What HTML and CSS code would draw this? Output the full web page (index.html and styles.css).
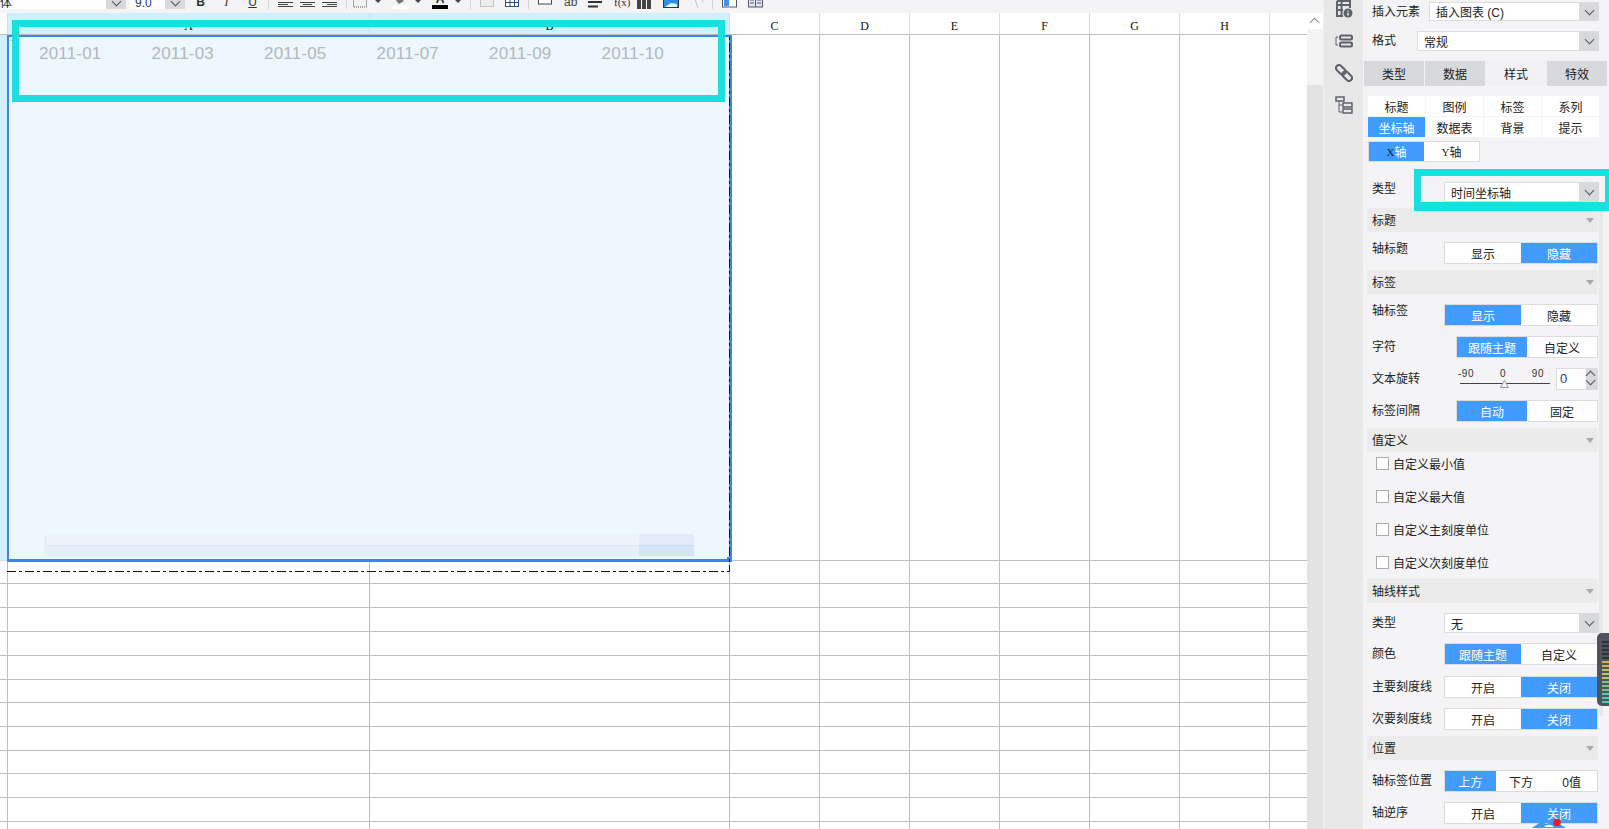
FILE: index.html
```html
<!DOCTYPE html>
<html lang="zh">
<head>
  <meta charset="UTF-8">
  <title>图表样式</title>
  <link rel="stylesheet" href="styles.css">
</head>
<body>
<div class="app">
  <div class="workspace">
    <div class="toolbar">
      <div class="combo font-combo"><span class="combo-text">宋体</span><span class="combo-arrow"></span></div>
      <div class="combo size-combo"><span class="combo-text">9.0</span><span class="combo-arrow"></span></div>
      <div class="tb-group biu">
        <span class="tb-char bold">B</span><span class="tb-char italic">I</span><span class="tb-char under">U</span>
      </div>
      <i class="tb-sep"></i>
      <div class="tb-group aligns">
        <svg width="15" height="16"><path d="M0 9.500h15M0 11.500h10M0 13.500h15" stroke="#444"/></svg>
        <svg width="15" height="16"><path d="M0 9.500h15M3 11.500h9M0 13.500h15" stroke="#444"/></svg>
        <svg width="15" height="16"><path d="M0 9.500h15M5 11.500h10M0 13.500h15" stroke="#444"/></svg>
      </div>
      <i class="tb-sep"></i>
      <svg class="ml6" width="14" height="16"><rect x=".5" y="2.500" width="13" height="11.500" fill="none" stroke="#555" stroke-dasharray="1 1"/></svg>
      <i class="tb-caret ml8"></i>
      <svg class="ml12" width="15" height="16"><path d="M4 2l7 6-5 3-4-5z" fill="#777"/><rect y="12" width="15" height="4" fill="#fff"/></svg>
      <i class="tb-caret ml7"></i>
      <div class="font-color ml11"><span>A</span><i></i></div>
      <i class="tb-caret ml7"></i>
      <i class="tb-sep"></i>
      <div class="tb-group pair">
        <svg width="14" height="16"><rect x=".5" y="1.500" width="13" height="12" fill="#eee" stroke="#c4c4c4"/></svg>
        <svg width="14" height="16"><rect x=".5" y="1.500" width="13" height="12" fill="#fff" stroke="#2e4f7c"/><path d="M0 5h14M0 9.500h14M5 1v12M9.500 1v12" stroke="#2e4f7c"/></svg>
      </div>
      <i class="tb-sep"></i>
      <div class="tb-group insert">
        <svg width="14" height="16"><rect x=".5" y="-4" width="13" height="15" fill="#fff" stroke="#444"/></svg>
        <span class="tb-char ab">ab</span>
        <svg width="14" height="16"><path d="M0 9h14M0 13.500h10" stroke="#333" stroke-width="2"/></svg>
        <span class="tb-char fx">f(x)</span>
      </div>
      <div class="tb-group media">
        <svg width="14" height="16"><path d="M0 7h4v9H0zM5 7h4v9H5zM10 7h4v9h-4z" fill="#444"/></svg>
        <svg width="16" height="16"><rect x=".5" y="2.500" width="15" height="12" fill="#2f8fe8" stroke="#334"/><path d="M2 14l6-4 6 1v3z" fill="#dff"/></svg>
        <svg width="16" height="16"><path d="M3 4l4 11M7 4l6 5" stroke="#c4c4c4" fill="none"/></svg>
      </div>
      <i class="tb-sep ml5"></i>
      <div class="tb-group pair">
        <svg width="15" height="16"><rect x=".5" y="1.500" width="14" height="12.500" fill="#fff" stroke="#556"/><rect x="2" y="3" width="5" height="10" fill="#3f93e6"/></svg>
        <svg width="15" height="16"><rect x=".5" y="1.500" width="14" height="12.500" fill="#dfe7f2" stroke="#556"/><path d="M7.500 2v12M2 7h4M9 7h4M2 10h4M9 10h4" stroke="#556"/></svg>
      </div>
    </div>

    <div class="sheet">
      <div class="row head">
        <i class="cell corner"></i><span class="cell col-a on">A</span><span class="cell col-b on">B</span><span class="cell col">C</span><span class="cell col">D</span><span class="cell col">E</span><span class="cell col">F</span><span class="cell col">G</span><span class="cell col">H</span><i class="cell col-last"></i>
      </div>
      <div class="row tall"><i class="cell corner on"></i><i class="cell col-a"></i><i class="cell col-b"></i><i class="cell col"></i><i class="cell col"></i><i class="cell col"></i><i class="cell col"></i><i class="cell col"></i><i class="cell col"></i><i class="cell col-last"></i></div>
      <div class="row h23"><i class="cell corner"></i><i class="cell col-a"></i><i class="cell col-b"></i><i class="cell col"></i><i class="cell col"></i><i class="cell col"></i><i class="cell col"></i><i class="cell col"></i><i class="cell col"></i><i class="cell col-last"></i></div>
      <div class="row"><i class="cell corner"></i><i class="cell col-a"></i><i class="cell col-b"></i><i class="cell col"></i><i class="cell col"></i><i class="cell col"></i><i class="cell col"></i><i class="cell col"></i><i class="cell col"></i><i class="cell col-last"></i></div>
      <div class="row"><i class="cell corner"></i><i class="cell col-a"></i><i class="cell col-b"></i><i class="cell col"></i><i class="cell col"></i><i class="cell col"></i><i class="cell col"></i><i class="cell col"></i><i class="cell col"></i><i class="cell col-last"></i></div>
      <div class="row"><i class="cell corner"></i><i class="cell col-a"></i><i class="cell col-b"></i><i class="cell col"></i><i class="cell col"></i><i class="cell col"></i><i class="cell col"></i><i class="cell col"></i><i class="cell col"></i><i class="cell col-last"></i></div>
      <div class="row"><i class="cell corner"></i><i class="cell col-a"></i><i class="cell col-b"></i><i class="cell col"></i><i class="cell col"></i><i class="cell col"></i><i class="cell col"></i><i class="cell col"></i><i class="cell col"></i><i class="cell col-last"></i></div>
      <div class="row h23"><i class="cell corner"></i><i class="cell col-a"></i><i class="cell col-b"></i><i class="cell col"></i><i class="cell col"></i><i class="cell col"></i><i class="cell col"></i><i class="cell col"></i><i class="cell col"></i><i class="cell col-last"></i></div>
      <div class="row"><i class="cell corner"></i><i class="cell col-a"></i><i class="cell col-b"></i><i class="cell col"></i><i class="cell col"></i><i class="cell col"></i><i class="cell col"></i><i class="cell col"></i><i class="cell col"></i><i class="cell col-last"></i></div>
      <div class="row"><i class="cell corner"></i><i class="cell col-a"></i><i class="cell col-b"></i><i class="cell col"></i><i class="cell col"></i><i class="cell col"></i><i class="cell col"></i><i class="cell col"></i><i class="cell col"></i><i class="cell col-last"></i></div>
      <div class="row h23"><i class="cell corner"></i><i class="cell col-a"></i><i class="cell col-b"></i><i class="cell col"></i><i class="cell col"></i><i class="cell col"></i><i class="cell col"></i><i class="cell col"></i><i class="cell col"></i><i class="cell col-last"></i></div>
      <div class="row"><i class="cell corner"></i><i class="cell col-a"></i><i class="cell col-b"></i><i class="cell col"></i><i class="cell col"></i><i class="cell col"></i><i class="cell col"></i><i class="cell col"></i><i class="cell col"></i><i class="cell col-last"></i></div>
      <div class="row"><i class="cell corner"></i><i class="cell col-a"></i><i class="cell col-b"></i><i class="cell col"></i><i class="cell col"></i><i class="cell col"></i><i class="cell col"></i><i class="cell col"></i><i class="cell col"></i><i class="cell col-last"></i></div>
      <div class="row"><i class="cell corner"></i><i class="cell col-a"></i><i class="cell col-b"></i><i class="cell col"></i><i class="cell col"></i><i class="cell col"></i><i class="cell col"></i><i class="cell col"></i><i class="cell col"></i><i class="cell col-last"></i></div>
    </div>
  </div>

  <div class="vscroll">
    <div class="vscroll-btn"><i></i></div>
    <div class="vscroll-track"></div>
    <div class="vscroll-thumb"></div>
  </div>

  <div class="rail">
    <svg width="18" height="18" viewBox="0 0 18 18"><path d="M2 1h13v7M2 1v15h6M2 5h13M6.500 1v15M2 10h6" fill="none" stroke="#5c616c" stroke-width="2"/><circle cx="13" cy="13" r="4.500" fill="#5c616c"/><path d="M13 10.500v1M13 12.500v3" stroke="#e8e8e8" stroke-width="1.500"/></svg>
    <svg width="18" height="18" viewBox="0 0 18 18"><path d="M3 5H1v8h2" fill="none" stroke="#5c616c"/><rect x="5" y="3.500" width="12" height="4" rx="1.500" fill="none" stroke="#5c616c" stroke-width="2"/><rect x="5" y="10.500" width="12" height="4" rx="1.500" fill="none" stroke="#5c616c" stroke-width="2"/></svg>
    <svg width="18" height="18" viewBox="0 0 18 18"><g fill="none" stroke="#5c616c" stroke-width="2" transform="rotate(45 9 9)"><rect x="-1" y="6" width="11" height="6" rx="3"/><rect x="8" y="6" width="11" height="6" rx="3"/></g></svg>
    <svg width="18" height="18" viewBox="0 0 18 18"><rect x="1" y="1" width="8" height="4" fill="none" stroke="#5c616c" stroke-width="1.500"/><path d="M4 5v11h3M4 9h3" fill="none" stroke="#5c616c"/><rect x="8" y="7" width="9" height="4" fill="none" stroke="#5c616c" stroke-width="1.500"/><rect x="8" y="13" width="9" height="4" fill="none" stroke="#5c616c" stroke-width="1.500"/></svg>
  </div>

  <div class="panel">
    <div class="p-row h19">
      <span class="p-label">插入元素</span>
      <div class="select w170"><span>插入图表 (C)</span><i class="select-arrow"></i></div>
    </div>
    <div class="p-row h20">
      <span class="p-label">格式</span>
      <div class="select w182"><span>常规</span><i class="select-arrow"></i></div>
    </div>
    <div class="tabs">
      <span>类型</span><span>数据</span><span class="on">样式</span><span>特效</span>
    </div>
    <div class="subtabs">
      <span>标题</span><span>图例</span><span>标签</span><span>系列</span>
      <span class="on">坐标轴</span><span>数据表</span><span>背景</span><span>提示</span>
    </div>
    <div class="toggle axis-toggle"><span class="on"><b>X</b>轴</span><span><b>Y</b>轴</span></div>
    <div class="p-row type-row">
      <span class="p-label up">类型</span>
      <div class="select w155"><span>时间坐标轴</span><i class="select-arrow"></i></div>
    </div>

    <div class="section">标题<i></i></div>
    <div class="p-row">
      <span class="p-label up">轴标题</span>
      <div class="toggle w154"><span>显示</span><span class="on">隐藏</span></div>
    </div>

    <div class="section">标签<i></i></div>
    <div class="p-row">
      <span class="p-label up">轴标签</span>
      <div class="toggle w154"><span class="on">显示</span><span>隐藏</span></div>
    </div>
    <div class="p-row">
      <span class="p-label">字符</span>
      <div class="toggle w142"><span class="on">跟随主题</span><span>自定义</span></div>
    </div>
    <div class="p-row">
      <span class="p-label">文本旋转</span>
      <div class="rotate">
        <div class="slider">
          <div class="ticks"><span>-90</span><span>0</span><span>90</span></div>
          <svg class="thumb" width="9" height="8"><path d="M4.500 .5L8.500 7.500H.5z" fill="#f4f4f6" stroke="#999"/></svg>
        </div>
        <div class="spin"><span>0</span><div class="spin-btns"><i class="up-ch"></i><i class="down-ch"></i></div></div>
      </div>
    </div>
    <div class="p-row">
      <span class="p-label">标签间隔</span>
      <div class="toggle w142"><span class="on">自动</span><span>固定</span></div>
    </div>

    <div class="section">值定义<i></i></div>
    <div class="checks">
      <label><i></i>自定义最小值</label>
      <label><i></i>自定义最大值</label>
      <label><i></i>自定义主刻度单位</label>
      <label><i></i>自定义次刻度单位</label>
    </div>

    <div class="section">轴线样式<i></i></div>
    <div class="p-row h20">
      <span class="p-label">类型</span>
      <div class="select w155"><span>无</span><i class="select-arrow"></i></div>
    </div>
    <div class="p-row">
      <span class="p-label">颜色</span>
      <div class="toggle w154"><span class="on">跟随主题</span><span>自定义</span></div>
    </div>
    <div class="p-row mt11">
      <span class="p-label">主要刻度线</span>
      <div class="toggle w154"><span>开启</span><span class="on">关闭</span></div>
    </div>
    <div class="p-row">
      <span class="p-label">次要刻度线</span>
      <div class="toggle w154"><span>开启</span><span class="on">关闭</span></div>
    </div>

    <div class="section">位置<i></i></div>
    <div class="p-row">
      <span class="p-label">轴标签位置</span>
      <div class="toggle w154"><span class="on">上方</span><span>下方</span><span>0值</span></div>
    </div>
    <div class="p-row">
      <span class="p-label">轴逆序</span>
      <div class="toggle w154"><span>开启</span><span class="on">关闭</span></div>
    </div>
    <i class="panel-scroll"></i>
  </div>

  <!-- things lying over the sheet and the panel -->
  <div class="chart">
    <div class="axis-labels">
      <span>2011-01</span><span>2011-03</span><span>2011-05</span><span>2011-07</span><span>2011-09</span><span>2011-10</span>
    </div>
    <div class="range"><i class="range-mark"></i><i class="range-handle"></i></div>
    <i class="chart-plus"></i>
    <i class="chart-grip"></i>
  </div>
  <svg class="dash-outline" width="732" height="573"><path d="M7 571.500H729.500V35" fill="none" stroke="#111" stroke-dasharray="9 3 3 3"/></svg>
  <div class="mark mark-labels"></div>
  <div class="mark mark-type"></div>
  <div class="meter">
    <i class="d"></i><i class="d"></i><i class="d"></i><i class="d"></i><i class="d"></i><i class="y"></i><i class="y"></i><i class="l"></i><i class="l"></i><i class="l"></i><i class="g"></i><i class="g"></i><i class="g"></i><i class="t"></i><i class="t"></i><i class="t"></i>
  </div>
  <svg class="cursor" width="44" height="10"><path d="M2 9L12 2l4 3 6-2 8 2 6 4z" fill="#3f9ae8"/><path d="M14 8c3-3 7-3 10 0z" fill="#fff"/><circle cx="27" cy="3.500" r="3.800" fill="#ee1c25"/></svg>
</div>
</body>
</html>
```

FILE: styles.css
```css
* {box-sizing: border-box;}
html, body {margin: 0; height: 100%; overflow: hidden;}
body {
  font-family: "Liberation Sans", "Noto Sans CJK SC", sans-serif;
  font-size: 12px;
  color: #222;
  background: #fff;
}
i {display: block; font-style: normal;}
.app {
  position: relative;
  display: flex;
  width: 1609px;
  height: 829px;
  overflow: hidden;
}

/* toolbar, only its lower edge is on screen */
.workspace {width: 1307px; flex: none;}
.toolbar {
  display: flex;
  align-items: flex-end;
  height: 13px;
  padding-bottom: 4px;
  background: #f4f4f6;
  overflow: hidden;
}
.combo {
  display: flex;
  align-items: flex-end;
  flex: none;
  height: 9px;
  overflow: hidden;
  background: #fff;
}
.font-combo {width: 126px;}
.size-combo {width: 55px; margin-left: 4px;}
.combo-text {flex: 1; line-height: 12px; height: 12px; white-space: nowrap; overflow: hidden;}
.font-combo .combo-text {text-indent: -12px;}
.size-combo .combo-text {padding-left: 5px; color: #203a70;}
.combo-arrow {position: relative; width: 20px; height: 9px; background: #d8d9dc;}
.combo-arrow::after {
  content: "";
  position: absolute;
  left: 7px;
  top: -2px;
  width: 6px;
  height: 6px;
  border-right: 1px solid #555;
  border-bottom: 1px solid #555;
  transform: rotate(45deg);
}
.tb-group {display: flex; align-items: flex-end; flex: none;}
.biu {gap: 13px; margin-left: 9px;}
.aligns {gap: 7px; margin-left: 9px;}
.pair {gap: 11px; margin-left: 9px;}
.insert {gap: 12px; margin-left: 9px;}
.media {gap: 12px; margin-left: 9px;}
.tb-char {
  display: block;
  width: 13px;
  height: 14px;
  line-height: 14px;
  text-align: center;
  color: #333;
  flex: none;
}
.bold {font-weight: bold;}
.italic {font-style: italic; font-family: "Liberation Serif", serif;}
.under {text-decoration: underline;}
.ab {width: 12px; color: #444;}
.fx {width: 14px; font-family: "Liberation Serif", serif; white-space: nowrap; font-size: 11px;}
.tb-sep {flex: none; width: 1px; height: 13px; margin-left: 9px; background: #d4d4d6;}
.tb-sep.ml5 {margin-left: 5px;}
.tb-caret {
  flex: none;
  width: 6px;
  height: 0;
  margin-bottom: 6px;
  border: 3px solid transparent;
  border-top-color: #444;
  border-bottom: 0;
}
.ml6 {margin-left: 6px; flex: none;}
.ml7 {margin-left: 7px;}
.ml8 {margin-left: 8px;}
.ml11 {margin-left: 11px;}
.ml12 {margin-left: 12px; flex: none;}
.font-color {flex: none; width: 16px; height: 16px; text-align: center; line-height: 12px; font-weight: bold;}
.font-color span {display: block; height: 12px;}
.font-color i {height: 4px; background: #000;}

/* sheet */
.sheet {height: 816px; overflow: hidden;}
.row {display: flex; height: 24px;}
.h23 {height: 23px;}
.row.head {height: 22px;}
.row.tall {height: 526px;}
.cell {
  flex: none;
  height: 100%;
  border-right: 1px solid #bdbdbd;
  border-bottom: 1px solid #bdbdbd;
  background: #fff;
}
.corner {width: 8px;}
.col-a {width: 362px;}
.col-b {width: 360px;}
.col {width: 90px;}
.col-last {flex: 1; border-right: 0;}
.head .cell {
  display: flex;
  align-items: center;
  justify-content: center;
  padding-top: 5px;
  border-right-color: #dcdcdc;
  font-family: "Liberation Serif", serif;
  font-size: 12px;
  color: #111;
}
.head .corner {border-right-color: #dcdcdc;}
.cell.on {background: #cff0fc;}
.tall .corner.on {border-bottom-color: #dcdcdc;}

/* sheet scrollbar */
.vscroll {width: 16px; flex: none; display: flex; flex-direction: column; padding-top: 13px; background: #f4f4f6;}
.vscroll-btn {height: 16px; background: #fff; position: relative;}
.vscroll-btn i {
  position: absolute;
  left: 4px;
  top: 6px;
  width: 7px;
  height: 7px;
  border-left: 1px solid #888;
  border-top: 1px solid #888;
  transform: rotate(45deg);
}
.vscroll-track {height: 56px;}
.vscroll-thumb {flex: 1; background: #e3e3e3;}

/* icon rail */
.rail {
  flex: none;
  width: 40px;
  display: flex;
  flex-direction: column;
  align-items: center;
  gap: 14px;
  background: #e8e8e8;
  border-left: 1px solid #f0f0f0;
}

/* right panel */
.panel {
  position: relative;
  flex: none;
  width: 246px;
  padding-top: 2px;
  display: flex;
  flex-direction: column;
  background: #f4f4f6;
}
.p-row {
  display: flex;
  align-items: center;
  justify-content: space-between;
  flex: none;
  height: 22px;
  margin-top: 10px;
  padding: 0 10px 0 9px;
}
.p-row.h19 {height: 19px; margin-top: 0;}
.p-row.h20 {height: 20px;}
.p-row.mt11 {margin-top: 11px;}
.type-row {height: 20px; margin-top: 20px;}
.p-label {line-height: 14px; white-space: nowrap;}
.p-label.up {align-self: flex-start;}
.select {
  display: flex;
  align-items: center;
  height: 100%;
  background: #fff;
  border: 1px solid #dcdcdc;
  border-right: 0;
}
.select span {flex: 1; padding-left: 6px;}
.select-arrow {position: relative; align-self: stretch; width: 20px; background: #d8d9dc;}
.select-arrow::after {
  content: "";
  position: absolute;
  left: 7px;
  top: 4px;
  width: 6px;
  height: 6px;
  border-right: 1px solid #555;
  border-bottom: 1px solid #555;
  transform: rotate(45deg);
}
.w170 {width: 170px;}
.w182 {width: 182px;}
.w155 {width: 155px;}
.tabs {display: flex; gap: 1px; flex: none; height: 25px; margin: 10px 0 0 1px;}
.tabs span {
  width: 60px;
  display: flex;
  align-items: center;
  justify-content: center;
  background: #d8d9dc;
}
.tabs span.on {background: #f1f1f3;}
.subtabs {
  display: grid;
  grid-template-columns: repeat(4, 57px);
  grid-auto-rows: 20px;
  gap: 1px;
  flex: none;
  margin: 10px 0 0 5px;
}
.subtabs span {
  display: flex;
  align-items: center;
  justify-content: center;
  background: #fff;
}
.subtabs span.on, .toggle span.on {background: #429bff; color: #fff;}
.toggle {
  display: flex;
  flex: none;
  height: 22px;
  margin-right: 1px;
  background: #fff;
  border: 1px solid #dcdcdc;
}
.toggle span {
  flex: 1;
  display: flex;
  align-items: center;
  justify-content: center;
  white-space: nowrap;
}
.toggle b {font-family: "Liberation Serif", serif; font-size: 11px; font-weight: normal; color: #222;}
.toggle span.on b {color: #123;}
.axis-toggle {width: 112px; height: 21px; margin: 4px 0 0 5px;}
.w154 {width: 154px;}
.w142 {width: 142px;}
.section {
  position: relative;
  flex: none;
  width: 231px;
  height: 24px;
  margin: 6px 0 0 4px;
  padding-left: 5px;
  line-height: 27px;
  background: #ebebeb;
}
.section i {
  position: absolute;
  right: 4px;
  top: 10px;
  border: 4px solid transparent;
  border-top: 5px solid #aaa;
  border-bottom: 0;
}
.rotate {display: flex; gap: 6px; width: 138px; height: 100%; margin-right: 1px;}
.slider {position: relative; width: 90px;}
.slider::after {
  content: "";
  position: absolute;
  left: 0;
  right: 0;
  top: 15px;
  height: 1px;
  background: #444;
}
.ticks {
  display: flex;
  justify-content: space-between;
  padding: 0 6px 0 0;
  margin-left: -2px;
  font-size: 10px;
  line-height: 12px;
  letter-spacing: .5px;
  color: #333;
}
.thumb {position: absolute; left: 40px; top: 12px; z-index: 1;}
.spin {
  flex: 1;
  display: flex;
  background: #fff;
  border: 1px solid #dcdcdc;
}
.spin span {flex: 1; padding-left: 3px; line-height: 20px; font-size: 13px; color: #1c3f7c;}
.spin-btns {position: relative; width: 11px; background: #d8d9dc;}
.up-ch, .down-ch {
  position: absolute;
  left: 1px;
  width: 7px;
  height: 7px;
  border-left: 1px solid #555;
  border-top: 1px solid #555;
  transform: rotate(45deg);
}
.up-ch {top: 3px;}
.down-ch {top: 8px; transform: rotate(225deg);}
.checks {display: flex; flex-direction: column; gap: 13px; flex: none; margin: 1px 0 0 13px;}
.checks label {display: flex; align-items: center; gap: 4px; height: 20px;}
.checks i {width: 13px; height: 13px; background: #fff; border: 1px solid #aaa;}
.checks + .section {margin-top: 7px;}
.panel-scroll {
  position: absolute;
  left: 236px;
  top: 211px;
  width: 4px;
  height: 505px;
  background: #e8e8e8;
}

/* chart laid over cells A1:B1 */
.chart {
  position: absolute;
  left: 7px;
  top: 35px;
  width: 725px;
  height: 527px;
  display: flex;
  flex-direction: column;
  background: #eef6fe;
  border: solid #3b86ee;
  border-width: 2px 3px 3px 2px;
}
.axis-labels {display: flex; padding: 7px 0 0 30px; color: #b1b8c3; font-size: 17px; line-height: 20px;}
.axis-labels span {width: 112.500px; letter-spacing: .2px;}
.range {
  position: relative;
  height: 22px;
  margin: auto 35px 3px;
  background: linear-gradient(to bottom, #ecf3fb 0, #ecf3fb 11px, #dfe9f5 11px, #dfe9f5 12px, #e7effa 12px);
}
.range-mark {position: absolute; left: 1px; top: 3px; width: 1px; height: 9px; background: #dde5ee;}
.range-handle {
  position: absolute;
  right: 0;
  top: 0;
  width: 55px;
  height: 22px;
  background: linear-gradient(to bottom, #e2ecf9 0, #e2ecf9 11px, #c5daf5 11px, #c5daf5 12px, #d7e4f6 12px);
}
.chart-plus {
  position: absolute;
  left: 1px;
  top: 1px;
  width: 5px;
  height: 5px;
  background:
    linear-gradient(#bbb, #bbb) center / 5px 1px no-repeat,
    linear-gradient(#bbb, #bbb) center / 1px 5px no-repeat;
}
.chart-grip {position: absolute; right: -3px; bottom: -3px; width: 5px; height: 5px; background: #3b86ee;}
.dash-outline {position: absolute; left: 0; top: 0;}

/* cyan highlights */
.mark {position: absolute; border: solid #1adfdf;}
.mark-labels {left: 12px; top: 20px; width: 713px; height: 82px; border-width: 7px;}
.mark-type {left: 1414px; top: 169px; width: 195px; height: 42px; border-width: 7px 4px 9px 7px;}

/* little floating meter and cursor on the panel edge */
.meter {
  position: absolute;
  left: 1597px;
  top: 633px;
  width: 12px;
  height: 73px;
  padding: 8px 0 0 5px;
  display: flex;
  flex-direction: column;
  gap: 2px;
  background: #50545e;
  border-radius: 5px 0 0 5px;
}
.meter i {width: 7px; height: 2px;}
.meter .d {background: #30333a;}
.meter .y {background: #d8b04e;}
.meter .l {background: #b5c665;}
.meter .g {background: #7cc08a;}
.meter .t {background: #48d0b0;}
.cursor {position: absolute; left: 1530px; top: 819px;}
```
